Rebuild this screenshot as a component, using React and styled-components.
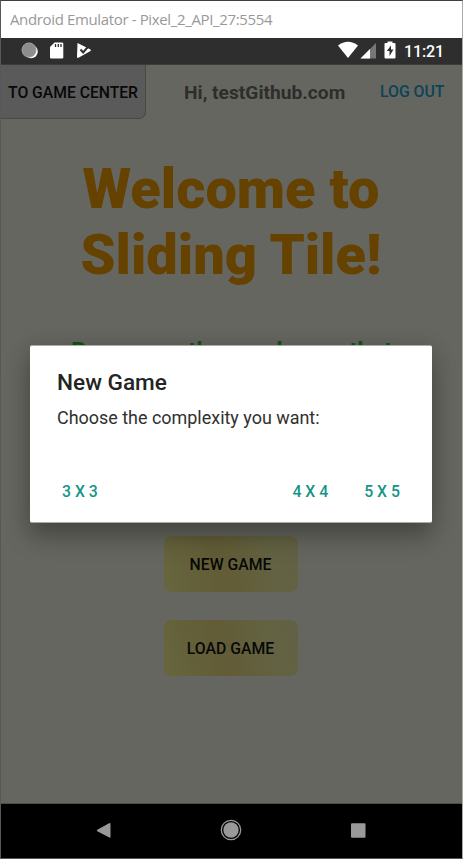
import React from "react";
import styled, { createGlobalStyle } from "styled-components";

const Global = createGlobalStyle`
  * { box-sizing: border-box; }
  body { margin: 0; background: #58585a; font-family: Roboto, sans-serif; }
  h1, h2, p { margin: 0; }
  button { font: inherit; border: 0; padding: 0; background: none; white-space: nowrap; }
`;

const Window = styled.div`
  width: 463px;
  height: 859px;
  display: flex;
  flex-direction: column;
  border: 1px solid #58585a;
  border-top-color: #413c46;
  border-right-color: #a9a9a9;
  overflow: hidden;
`;

const TitleBar = styled.header`
  height: 37px;
  flex: none;
  padding: 0 9px;
  background: #fff;
  color: #999;
  font: 15px/37px "Open Sans", sans-serif;
  letter-spacing: -0.36px;
  white-space: nowrap;
`;

const StatusBar = styled.div`
  height: 27px;
  flex: none;
  display: flex;
  align-items: center;
  justify-content: space-between;
  padding-right: 18px;
  background: #2e2e2e;
  border-bottom: 1px solid #3c3c3b;
  color: #fff;
  svg { display: block; flex: none; }
`;

const SystemStatus = styled.div`
  display: flex;
  align-items: center;
  gap: 7px;
`;

const Clock = styled.span`
  font-size: 16px;
  font-weight: 500;
  line-height: 26px;
  letter-spacing: -0.1px;
  padding-top: 1px;
`;

const Screen = styled.main`
  position: relative;
  flex: 1;
  background: #666660;
  border-bottom: 1px solid #4c4c49;
`;

const TopRow = styled.div`
  display: flex;
  height: 54px;
  line-height: 56px;
  white-space: nowrap;
`;

const CenterButton = styled.button`
  width: 145px;
  height: 54px;
  padding-top: 1px;
  background: #5a5a5a;
  border: 1px solid #484846;
  border-top: 0;
  border-left: 0;
  border-radius: 0 0 7px 0;
  color: #080808;
  font-size: 15.7px;
  line-height: 53px;
  font-weight: 500;
`;

const Greeting = styled.span`
  width: 161px;
  margin-left: 38px;
  color: #2d2d2b;
  font-size: 19.2px;
  font-weight: 700;
  line-height: 55px;
`;

const LogOut = styled.button`
  margin-left: 35px;
  color: #0b4358;
  font-size: 15.8px;
  line-height: 54px;
  font-weight: 500;
`;

const Headline = styled.h1`
  margin-top: 38px;
  padding-right: 1px;
  color: #664200;
  font-size: 56px;
  line-height: 65.6px;
  font-weight: 900;
  text-align: center;
`;

const Intro = styled.p`
  margin-top: 49px;
  height: 146px;
  color: #145214;
  font-size: 24px;
  line-height: 28px;
  font-weight: 700;
  text-align: center;
`;

const Actions = styled.div`
  display: flex;
  flex-direction: column;
  align-items: center;
  gap: 28px;
  margin-top: 53px;
  padding-right: 2px;
`;

const GameButton = styled.button`
  width: 134px;
  height: 56px;
  border-radius: 7px;
  background: linear-gradient(75deg, #66663f 0%, #625d36 38%, #625d38 50%, #636242 78%, #626145 100%);
  color: #080808;
  font-size: 15.8px;
  font-weight: 500;
`;

const Dialog = styled.section`
  position: absolute;
  left: 29px;
  top: 280px;
  width: 402px;
  height: 178px;
  padding: 23px 27px 0;
  background: #fff;
  border: 1px solid #aaaaa7;
  border-width: 1px 0;
  border-radius: 2px;
  box-shadow: 0 14px 24px rgba(0, 0, 0, 0.28), 0 0 22px rgba(0, 0, 0, 0.1);
`;

const DialogTitle = styled.h2`
  color: #242424;
  font-size: 22.6px;
  line-height: 28px;
  font-weight: 500;
`;

const DialogText = styled.p`
  margin-top: 9px;
  color: #303030;
  font-size: 17.95px;
  line-height: 24px;
`;

const Choices = styled.div`
  display: flex;
  gap: 36px;
  margin: 52px 5px 0;
  button:first-child { margin-right: auto; }
`;

const Choice = styled.button`
  color: #159488;
  font-size: 15.8px;
  line-height: 20px;
  font-weight: 500;
`;

const NavBar = styled.nav`
  height: 54px;
  flex: none;
  display: flex;
  justify-content: center;
  align-items: center;
  gap: 105px;
  padding: 0 2px 2px 0;
  background: #000;
  svg { display: block; }
`;

const NotificationIcons = () => (
  <svg width="92" height="26" viewBox="1 39 92 26">
    <circle cx="31" cy="52.5" r="6.8" fill="#fff" />
    <circle cx="29" cy="51" r="7.4" fill="#8d8d8d" />
    <circle cx="29" cy="51" r="6.9" fill="none" stroke="#b3b3b3" strokeWidth=".9" strokeDasharray="1 1" />
    <path d="M54.500 43.500H62q1.300 0 1.300 1.300v13.400q0 1.300-1.300 1.300H51.300q-1.300 0-1.300-1.300V48z" fill="#fff" />
    <path d="M55.500 45v3M58.300 45v3M61 45v3" stroke="#2e2e2e" strokeWidth="1.300" />
    <path d="M77.500 44l13 6.500q1 .7 0 1.400L78.500 58.800q-1.500.4-1.500-1z" fill="#fff" />
    <path d="M80.500 50.500l2.700 3 6.300-7.500" fill="none" stroke="#2e2e2e" strokeWidth="2" />
  </svg>
);

const SignalIcons = () => (
  <svg width="60" height="26" viewBox="337 39 60 26">
    <path d="M338 46.500q10-7.500 20 0L348 59z" fill="#fff" />
    <path d="M376 44v15.500h-15.500z" fill="#777" />
    <path d="M370 50v9.500h-9.500z" fill="#fff" />
    <path d="M387.500 42.500h5v1.500h2q1 0 1 1v13.500q0 1-1 1h-9q-1 0-1-1V45q0-1 1-1h2z" fill="#fff" />
    <path d="M391 46.500l-4.200 5.500h2.700v5l4-6.500H391z" fill="#2e2e2e" />
  </svg>
);

const BackIcon = () => (
  <svg width="22" height="22" viewBox="0 0 22 22">
    <path d="M16.500 4q1 0 1 1v13q0 1-1.200.6L4.300 12.200q-1-.7 0-1.400z" fill="#999" />
  </svg>
);

const HomeIcon = () => (
  <svg width="22" height="22" viewBox="0 0 22 22">
    <circle cx="11" cy="11" r="9.700" fill="none" stroke="#999" strokeWidth="1.300" />
    <circle cx="11" cy="11" r="7.700" fill="#999" />
  </svg>
);

const RecentsIcon = () => (
  <svg width="22" height="22" viewBox="0 0 22 22">
    <rect x="4" y="4.200" width="14.500" height="14.500" rx="1" fill="#999" />
  </svg>
);

export default function App() {
  return (
    <>
      <Global />
      <Window>
        <TitleBar>Android Emulator - Pixel_2_API_27:5554</TitleBar>
        <StatusBar>
          <NotificationIcons />
          <SystemStatus>
            <SignalIcons />
            <Clock>11:21</Clock>
          </SystemStatus>
        </StatusBar>
        <Screen>
          <TopRow>
            <CenterButton>TO GAME CENTER</CenterButton>
            <Greeting>Hi, testGithub.com</Greeting>
            <LogOut>LOG OUT</LogOut>
          </TopRow>
          <Headline>Welcome to<br />Sliding Tile!</Headline>
          <Intro>Rearrange the number so that</Intro>
          <Actions>
            <GameButton>NEW GAME</GameButton>
            <GameButton>LOAD GAME</GameButton>
          </Actions>
          <Dialog role="dialog" aria-label="New Game">
            <DialogTitle>New Game</DialogTitle>
            <DialogText>Choose the complexity you want:</DialogText>
            <Choices>
              <Choice>3 X 3</Choice>
              <Choice>4 X 4</Choice>
              <Choice>5 X 5</Choice>
            </Choices>
          </Dialog>
        </Screen>
        <NavBar>
          <BackIcon />
          <HomeIcon />
          <RecentsIcon />
        </NavBar>
      </Window>
    </>
  );
}
